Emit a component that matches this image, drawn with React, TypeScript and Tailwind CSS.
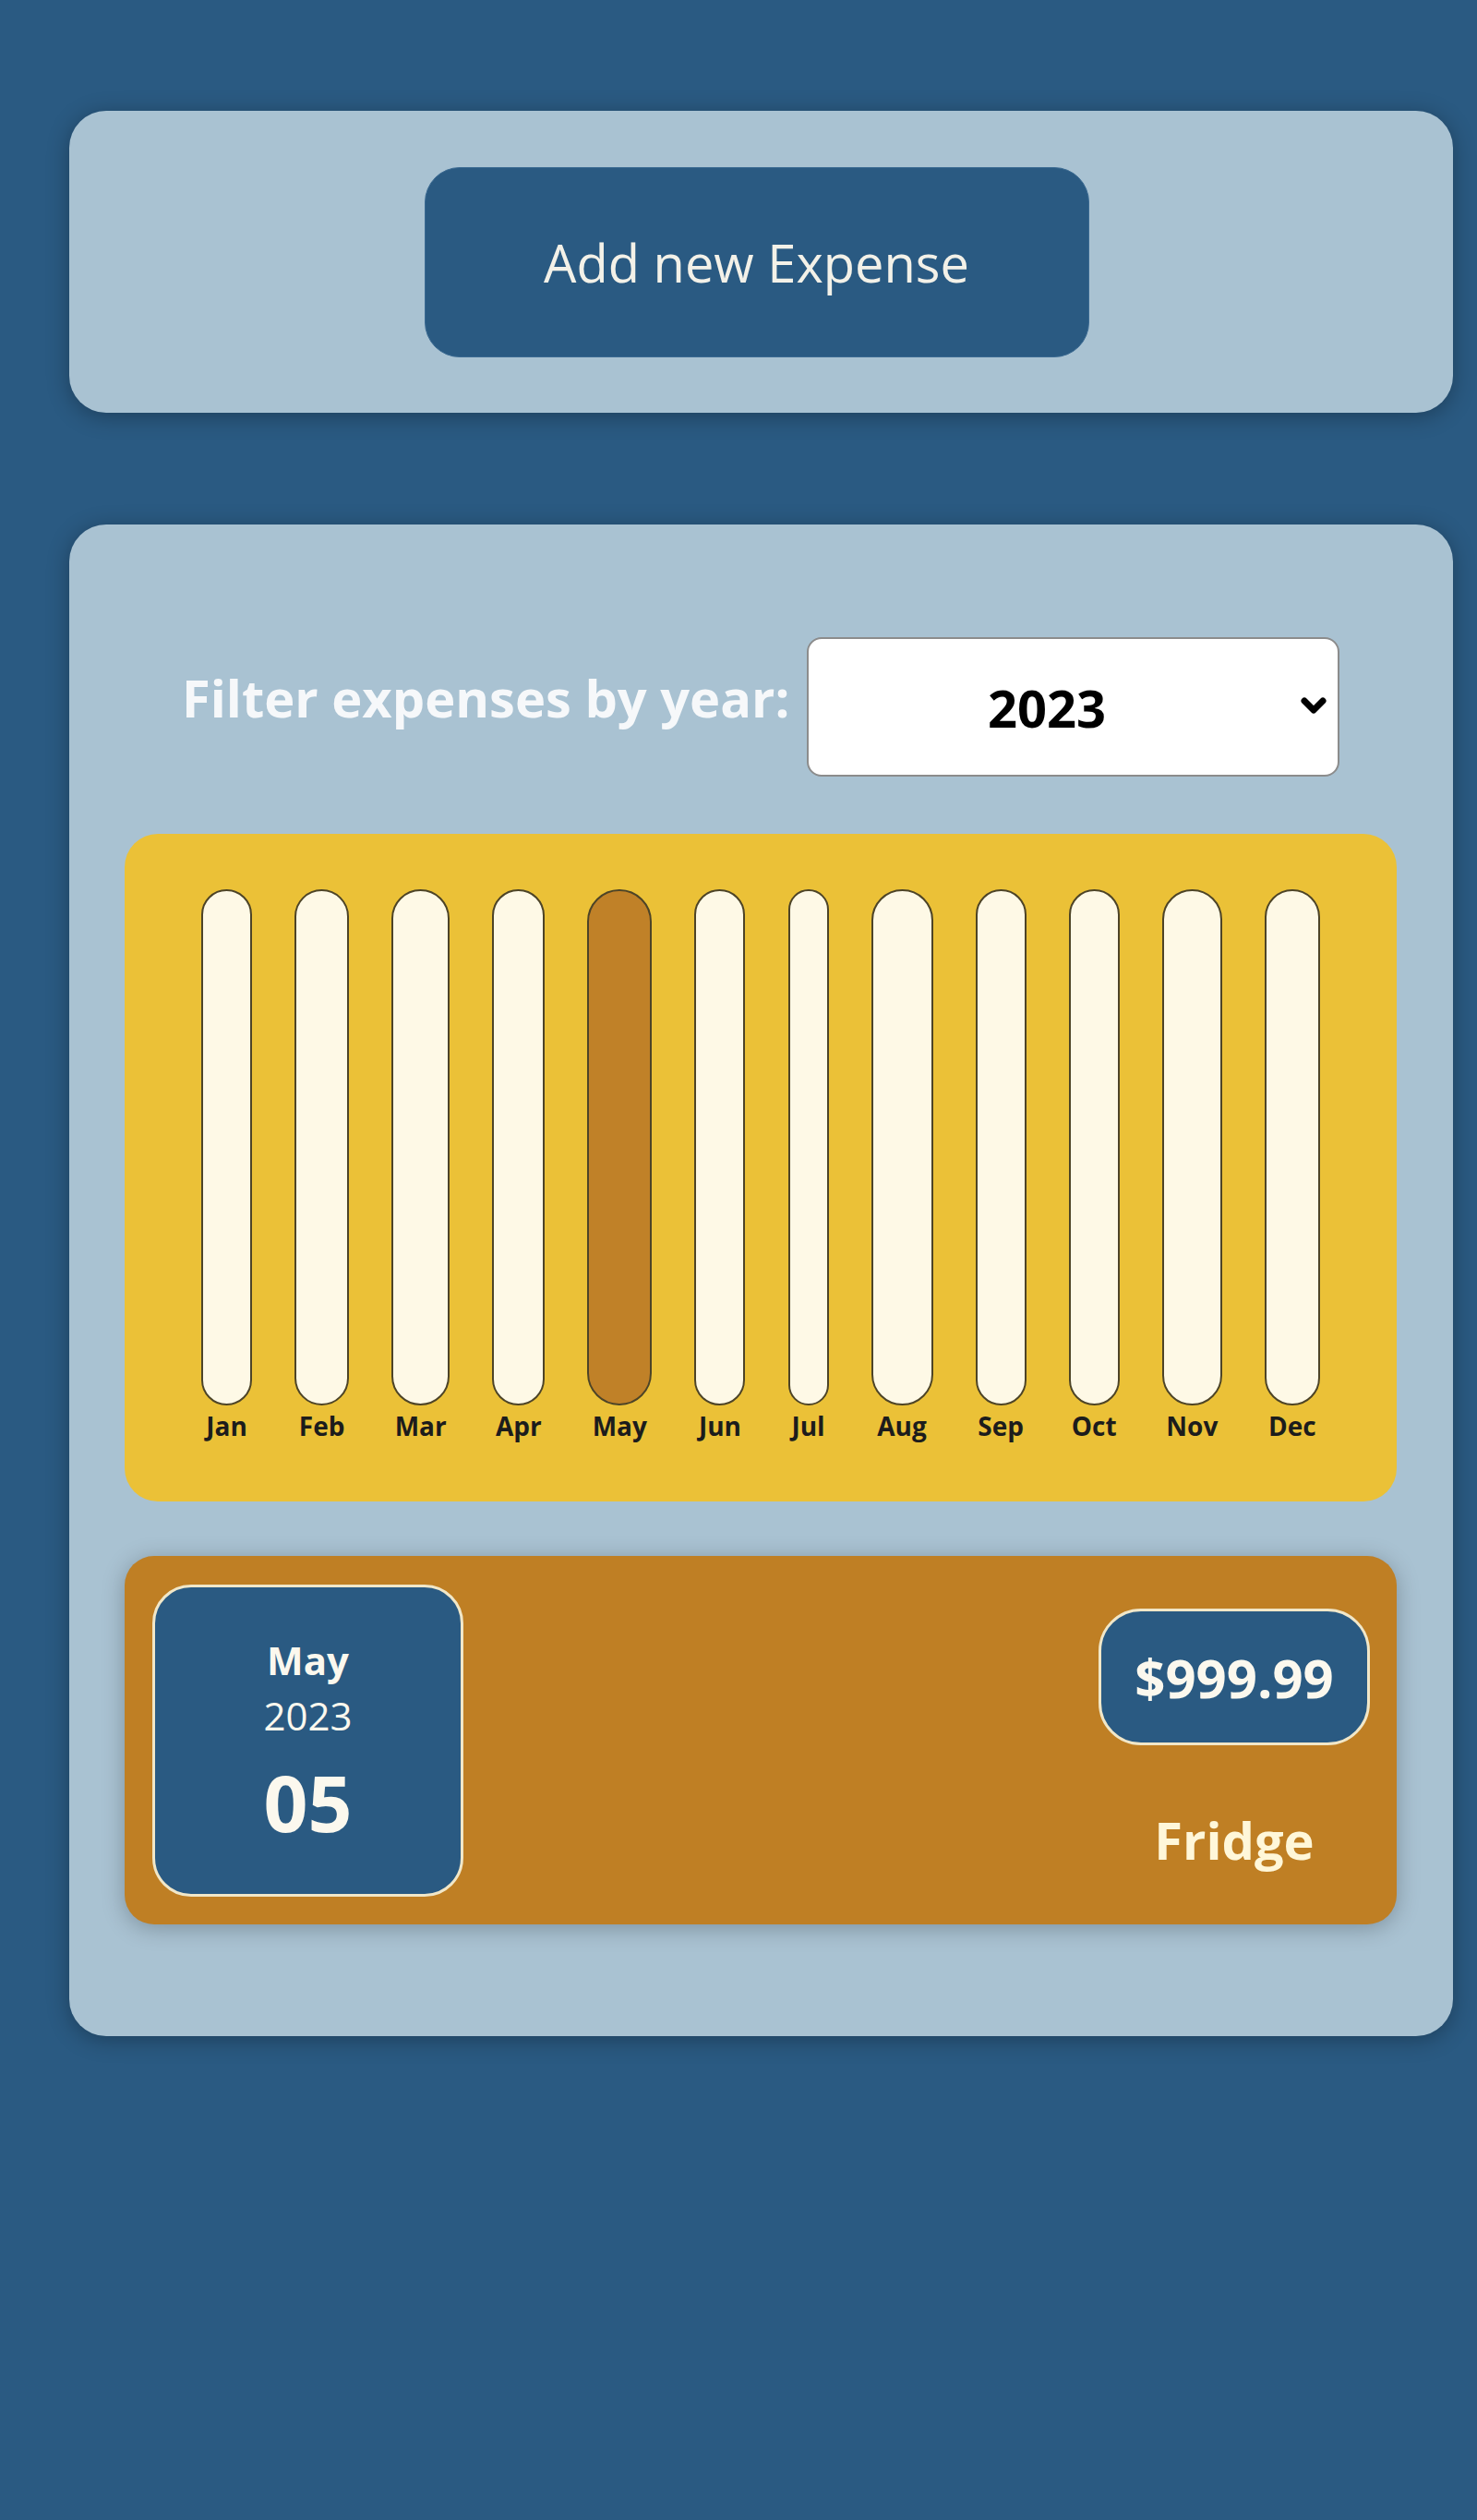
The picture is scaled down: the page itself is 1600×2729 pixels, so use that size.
import React from "react";

const months = [
  { l: "Jan", w: "w-[55px]", active: false },
  { l: "Feb", w: "w-[59px]", active: false },
  { l: "Mar", w: "w-[63px]", active: false },
  { l: "Apr", w: "w-[57px]", active: false },
  { l: "May", w: "w-[70px]", active: true },
  { l: "Jun", w: "w-[55px]", active: false },
  { l: "Jul", w: "w-[44px]", active: false },
  { l: "Aug", w: "w-[67px]", active: false },
  { l: "Sep", w: "w-[55px]", active: false },
  { l: "Oct", w: "w-[55px]", active: false },
  { l: "Nov", w: "w-[65px]", active: false },
  { l: "Dec", w: "w-[60px]", active: false },
];

export default function App() {
  return (
    <div className="min-h-screen bg-[#2a5a82] pt-[120px] pb-[40px] font-['Open_Sans',sans-serif]">
      {/* New expense card */}
      <div className="ml-[75px] w-[1499px] h-[327px] rounded-[40px] bg-[#a9c2d2] shadow-[0_4px_24px_rgba(0,0,0,0.3)] flex items-center justify-center pr-[10px]">
        <button className="w-[720px] h-[206px] rounded-[38px] bg-[#2a5a82] text-[#f3f1e8] text-[56px] leading-none border border-[#3b6a92]">
          Add new Expense
        </button>
      </div>

      {/* Expenses card */}
      <div className="ml-[75px] mt-[121px] w-[1499px] rounded-[40px] bg-[#a9c2d2] shadow-[0_4px_24px_rgba(0,0,0,0.3)] pt-[122px] pb-[121px] pl-[60px] pr-[61px]">
        {/* Filter */}
        <div className="flex items-center justify-between px-[62px]">
          <label className="text-[56px] font-bold text-[#f6f8fa] mb-[22px] leading-tight">
            Filter expenses by year:
          </label>
          <div className="relative w-[577px] h-[151px]">
            <select
              defaultValue="2023"
              className="appearance-none w-full h-full rounded-[16px] bg-white border-2 border-[#8c8c8c] pl-[194px] text-[56px] font-bold text-black font-['Open_Sans',sans-serif] outline-none"
            >
              <option>2022</option>
              <option>2023</option>
              <option>2024</option>
            </select>
            <svg
              className="absolute right-[13px] top-[64px] pointer-events-none"
              width="30"
              height="22"
              viewBox="0 0 30 22"
            >
              <path d="M5 5 L15 15 L25 5" fill="none" stroke="#000" strokeWidth="7" strokeLinecap="round" strokeLinejoin="round" />
            </svg>
          </div>
        </div>

        {/* Chart */}
        <div className="mt-[62px] h-[723px] rounded-[36px] bg-[#ebc137] p-[60px] flex justify-around">
          {months.map((m) => (
            <div key={m.l} className="flex flex-col items-center h-full">
              <div
                className={`${m.w} h-[559px] rounded-full border-2 border-[#4d4427] ${
                  m.active ? "bg-[#c08128]" : "bg-[#fef9e6]"
                }`}
              />
              <div className="h-[44px] flex items-center text-[28px] font-bold text-[#1c1c1c] leading-none">
                {m.l}
              </div>
            </div>
          ))}
        </div>

        {/* Expense item */}
        <div className="mt-[59px] h-[399px] rounded-[32px] bg-[#bf7f24] shadow-[0_4px_24px_rgba(0,0,0,0.25)] flex items-center justify-between pl-[30px] pr-[29px]">
          <div className="w-[337px] h-[338px] rounded-[42px] bg-[#2a5a82] border-[3px] border-[#f1e7c8] flex flex-col items-center justify-center text-[#fbf8ee]">
            <div className="text-[42px] font-bold leading-[60px]">May</div>
            <div className="text-[42px] leading-[60px]">2023</div>
            <div className="text-[84px] font-bold leading-[100px] mt-[14px]">05</div>
          </div>
          <div className="self-stretch flex flex-col items-center pt-[57px]">
            <div className="w-[294px] h-[148px] rounded-[46px] bg-[#2a5a82] border-[3px] border-[#f1e7c8] flex items-center justify-center text-[58px] font-bold text-[#fbf8ee]">
              $999.99
            </div>
            <div className="mt-[62px] text-[56px] font-bold text-[#fff7d9] leading-[80px]">
              Fridge
            </div>
          </div>
        </div>
      </div>
    </div>
  );
}
